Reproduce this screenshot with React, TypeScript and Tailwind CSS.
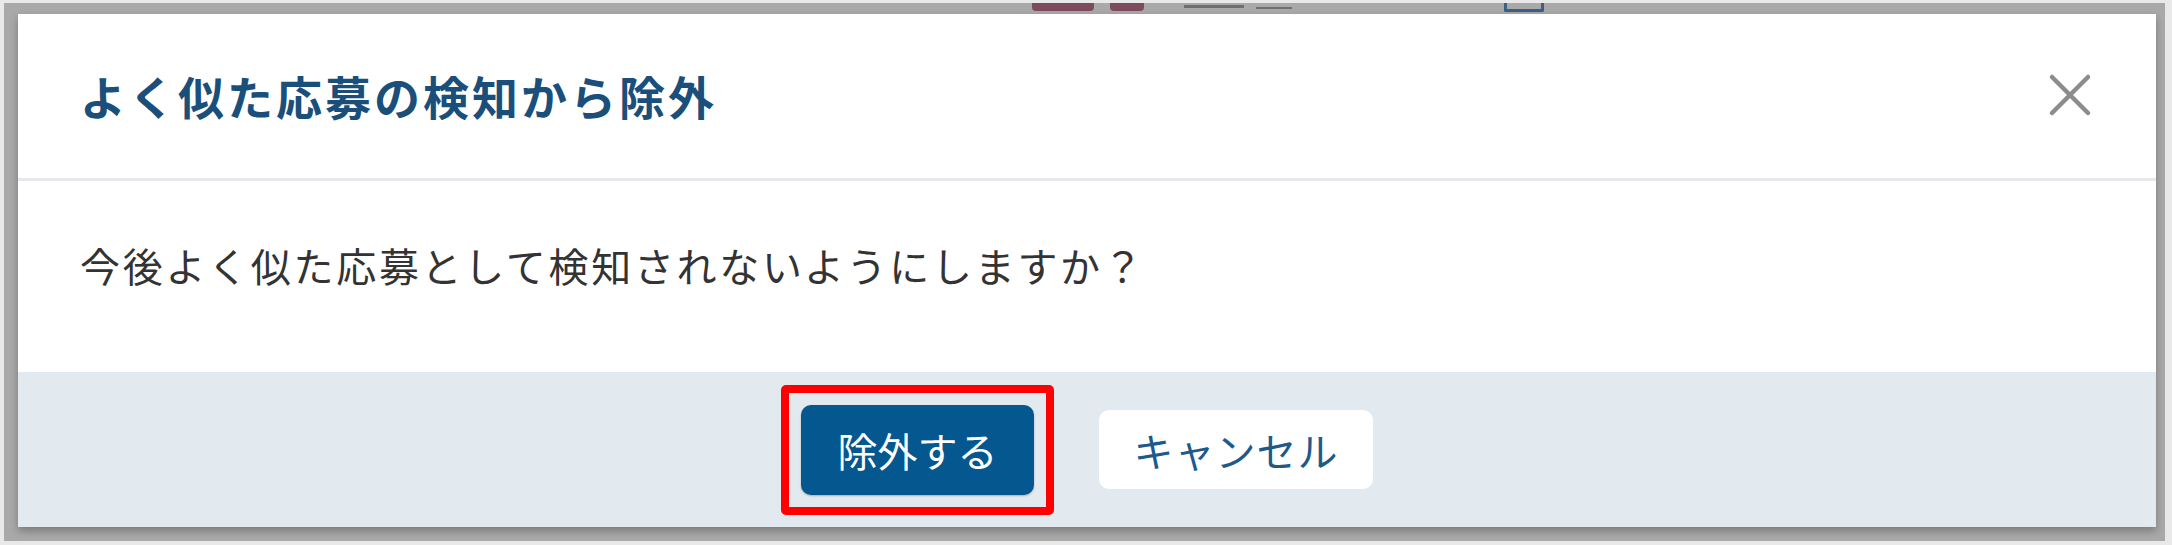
import React from "react";

const font = { fontFamily: '"Noto Sans CJK JP", "Noto Sans", sans-serif' };

export default function App() {
  return (
    <div
      className="w-[2172px] h-[545px] bg-[#e9e9e9] pt-[3px] pl-[4px] pr-[7px] pb-[4px] overflow-hidden"
      style={font}
    >
      <div className="w-full h-full bg-[#a9a9a9] flex flex-col">
        {/* backdrop bleed strip */}
        <div className="h-[11px] flex items-start overflow-hidden">
          <div className="ml-[1028px] w-[62px] h-[8px] bg-[#7d4a5e] rounded-b-[4px]" />
          <div className="ml-[16px] w-[34px] h-[8px] bg-[#7d4a5e] rounded-b-[4px]" />
          <div className="ml-[40px] mt-[2px] w-[60px] h-[3px] bg-[#6f6f6f]" />
          <div className="ml-[12px] mt-[4px] w-[36px] h-[2px] bg-[#6f6f6f]" />
          <div className="ml-[212px] w-[40px] h-[9px] border-[3px] border-t-0 border-[#3c5f86] rounded-b-[2px]" />
        </div>
        <div className="flex-1 pl-[14px] pr-[9px] pb-[14px] flex">
          <div className="flex-1 flex flex-col bg-white shadow-[0_4px_8px_rgba(0,0,0,0.28)]">
            {/* header */}
            <div className="h-[164px] flex items-center justify-between pl-[62px] pr-[64px] pb-[2px]">
              <h1 className="text-[46px] font-bold tracking-[3px] text-[#1a4f7b] leading-none">
                よく似た応募の検知から除外
              </h1>
              <svg width="44" height="44" viewBox="0 0 44 44" className="shrink-0">
                <path
                  d="M4 4 L40 40 M40 4 L4 40"
                  stroke="#8c8c8c"
                  strokeWidth="4.5"
                  strokeLinecap="round"
                />
              </svg>
            </div>
            <div className="h-[3px] bg-[#e6e8eb]" />
            {/* body */}
            <div className="h-[191px] flex items-center pl-[62px] pb-[24px]">
              <p className="text-[40px] tracking-[2.7px] text-[#333333] leading-none">
                今後よく似た応募として検知されないようにしますか？
              </p>
            </div>
            {/* footer */}
            <div className="h-[155px] bg-[#e2e9ef] flex items-center justify-center gap-[65px]">
              <button className="relative w-[233px] h-[90px] bg-[#04578f] rounded-[10px] text-white text-[40px] leading-none shadow-[0_1px_2px_rgba(0,0,0,0.25)]">
                除外する
                <span className="absolute -inset-[20px] border-[8px] border-[#ff0000] rounded-[5px] pointer-events-none" />
              </button>
              <button className="w-[274px] h-[79px] bg-white rounded-[10px] text-[#1d5a8c] text-[40px] tracking-[1px] leading-none">
                キャンセル
              </button>
            </div>
          </div>
        </div>
      </div>
    </div>
  );
}
